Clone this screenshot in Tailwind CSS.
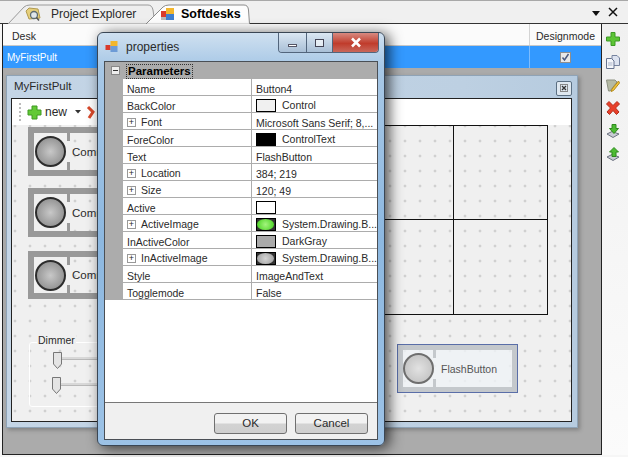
<!DOCTYPE html>
<html lang="en">
<head>
    <meta charset="UTF-8">
    <title>Softdesks</title>
    <script src="https://cdn.jsdelivr.net/npm/@tailwindcss/browser@4"></script>
</head>
<body class="relative w-[628px] h-[457px] overflow-hidden bg-[#f6f6f6] text-[10.5px] text-[#2a2a2a] [font-family:'Liberation_Sans',sans-serif]">
    <!-- tab strip -->
    <div class="relative h-6 bg-[#f0f0f0] border-t border-[#a8a8a8] border-b border-b-[#333]">
        <svg class="absolute left-0 top-0" width="260" height="24" viewBox="0 0 260 24">
            <path d="M8 23 L24 6 Q26 4 30 4 L148 4 Q152 4 153 9 L155 23 Z" fill="#eeeeee" stroke="#9a9a9a"/>
            <path d="M146 23 L163 6 Q165 4 169 4 L244 4 Q248 4 248.500 9 L249.500 23 Z" fill="#fdfdfd" stroke="#8a8a8a"/>
            <path d="M147 23 L249 23" stroke="#fdfdfd"/>
        </svg>
        <div class="relative flex items-center h-[22px] pt-[4px]">
            <svg class="ml-[24px]" width="18" height="16" viewBox="0 0 18 16">
                <path d="M2 5 L5 2 L14 3 L16 12 L5 13 Z" fill="#e6cf7a" stroke="#b09a50"/>
                <circle cx="10" cy="9" r="3.500" fill="#dfe6ea" stroke="#5d6b70" stroke-width="1.300"/>
                <path d="M12.500 11.500 L15 14.500" stroke="#555" stroke-width="1.500"/>
            </svg>
            <span class="ml-[9px] w-[87px] text-[12px] whitespace-nowrap">Project Explorer</span>
            <svg class="ml-[22px]" width="15" height="15" viewBox="0 0 15 15">
                <rect x="1" y="4" width="5" height="6" fill="#d93a2b"/>
                <rect x="6" y="1" width="8" height="6" fill="#f3b62c"/>
                <rect x="6" y="7" width="8" height="6" fill="#3f7fd0"/>
                <rect x="1" y="10" width="5" height="3" fill="#b9b9b9"/>
            </svg>
            <span class="ml-[6px] text-[12.500px] font-bold text-black">Softdesks</span>
            <svg class="absolute left-[591px] top-[10px]" width="10" height="6" viewBox="0 0 10 6"><path d="M1 0 H9 L5 5 Z" fill="#111"/></svg>
            <svg class="absolute left-[608px] top-[6px]" width="10" height="10" viewBox="0 0 10 10"><path d="M1 1 L9 9 M9 1 L1 9" stroke="#111" stroke-width="1.500"/></svg>
        </div>
    </div>

    <div class="flex h-[431px]">
        <!-- main panel -->
        <div class="relative ml-[2px] w-[600px] h-[431px] border border-[#222] border-t-0 bg-[#ababab]">
            <div class="flex h-[22px] bg-[#fbfbfb] border-b border-[#c8c8c8]">
                <div class="w-[526px] pl-[9px] leading-[25px]">Desk</div>
                <div class="flex-1 border-l border-[#d4d4d4] text-center leading-[25px]">Designmode</div>
            </div>
            <div class="flex h-[22px] bg-[#3399ff] text-white">
                <div class="w-[526px] pl-[4px] leading-[23px] text-[10px]">MyFirstPult</div>
                <div class="flex-1 border-l border-[#7cbcff] flex items-center justify-center">
                    <div class="w-[11px] h-[11px] bg-[#e8e8e8] border border-[#8e8e8e] flex items-center justify-center">
                        <svg width="9" height="9" viewBox="0 0 9 9"><path d="M1.500 4.500 L3.500 7 L7.500 1" fill="none" stroke="#4a5a80" stroke-width="1.500"/></svg>
                    </div>
                </div>
            </div>

            <!-- child window -->
            <div class="absolute left-[3px] top-[51px] w-[572px] h-[353px] bg-[linear-gradient(90deg,#c4d5e6,#bdd0e2_80%,#b6cbdf)] border border-[#8fa3b6] shadow-[2px_2px_4px_rgba(0,0,0,0.25)] pl-[4px] pr-[5px] pb-[4px]">
                <div class="flex items-center justify-between h-[22px]">
                    <span class="pl-[3px] text-[11.500px]">MyFirstPult</span>
                    <div class="w-4 h-[15px] mt-[2px] border border-[#5b6f82] rounded-[2px] bg-[#dfe8f0] flex items-center justify-center">
                        <svg width="8" height="8" viewBox="0 0 8 8"><path d="M2 2 L6 6 M6 2 L2 6" stroke="#333" stroke-width="1.300"/><rect x="0.500" y="0.500" width="7" height="7" fill="none" stroke="#888"/></svg>
                    </div>
                </div>
                <div class="relative w-[561px] h-[324px] border border-[#222] overflow-hidden bg-[#f0f0f0] bg-[radial-gradient(circle,#b0b0b0_0.8px,transparent_1.2px)] bg-[length:15px_15px] bg-[position:-4.5px_4.5px]">
                    <div class="flex items-center h-[26px] bg-white pl-[7px]">
                        <div class="w-[2px] h-[18px] border-l-2 border-dotted border-[#bbb]"></div>
                        <svg class="ml-[6px]" width="15" height="15" viewBox="0 0 15 15"><path d="M5 1 H10 V5 H14 V10 H10 V14 H5 V10 H1 V5 H5 Z" fill="#62c936" stroke="#3f9a22"/></svg>
                        <span class="ml-[3px] text-[12px]">new</span>
                        <svg class="ml-[8px]" width="6" height="4" viewBox="0 0 6 4"><path d="M0 0 H6 L3 3.500 Z" fill="#333"/></svg>
                        <svg class="ml-[5px]" width="9" height="14" viewBox="0 0 9 14"><path d="M2 2 L7 7 L3 13" fill="none" stroke="#d8482a" stroke-width="3"/></svg>
                    </div>

                    <!-- buttons on the design canvas -->
                    <div class="absolute left-[16px] top-[28px] w-[120px] h-[49px] border-[6px] border-[#999] flex items-center">
                        <div class="absolute left-0 top-0 w-[33px] h-full bg-[#f0f0f0]"></div>
                        <div class="absolute left-[33px] top-0 w-[3px] h-2 bg-[#999]"></div>
                        <div class="absolute left-[33px] bottom-0 w-[3px] h-2 bg-[#999]"></div>
                        <div class="relative w-[31px] h-[31px] ml-px rounded-full border-2 border-[#2c2c2c] bg-[radial-gradient(circle,#c8c8c8,#828282)]"></div>
                        <span class="relative top-px ml-[6px] text-[11.500px]">Comm</span>
                    </div>
                    <div class="absolute left-[16px] top-[89px] w-[120px] h-[49px] border-[6px] border-[#999] flex items-center">
                        <div class="absolute left-0 top-0 w-[33px] h-full bg-[#f0f0f0]"></div>
                        <div class="absolute left-[33px] top-0 w-[3px] h-2 bg-[#999]"></div>
                        <div class="absolute left-[33px] bottom-0 w-[3px] h-2 bg-[#999]"></div>
                        <div class="relative w-[31px] h-[31px] ml-px rounded-full border-2 border-[#2c2c2c] bg-[radial-gradient(circle,#c8c8c8,#828282)]"></div>
                        <span class="relative top-px ml-[6px] text-[11.500px]">Comm</span>
                    </div>
                    <div class="absolute left-[16px] top-[152px] w-[120px] h-[48px] border-[6px] border-[#999] flex items-center">
                        <div class="absolute left-0 top-0 w-[33px] h-full bg-[#f0f0f0]"></div>
                        <div class="absolute left-[33px] top-0 w-[3px] h-2 bg-[#999]"></div>
                        <div class="absolute left-[33px] bottom-0 w-[3px] h-2 bg-[#999]"></div>
                        <div class="relative w-[31px] h-[31px] ml-px rounded-full border-2 border-[#2c2c2c] bg-[radial-gradient(circle,#c8c8c8,#828282)]"></div>
                        <span class="relative top-px ml-[6px] text-[11.500px]">Comm</span>
                    </div>

                    <!-- dimmer group -->
                    <div class="absolute left-[17px] top-[243px] w-[120px] h-[65px] border border-white rounded-[3px]"></div>
                    <span class="absolute left-[25px] top-[235px] px-px leading-[13px] bg-[#f0f0f0]">Dimmer</span>
                    <div class="absolute left-[45px] top-[258px] w-[80px] h-[3px] bg-[#d8d8d8] border-b border-[#b8b8b8]"></div>
                    <div class="absolute left-[45px] top-[284px] w-[80px] h-[3px] bg-[#d8d8d8] border-b border-[#b8b8b8]"></div>
                    <svg class="absolute left-[40px] top-[252px]" width="11" height="19" viewBox="0 0 11 19"><path d="M1.500 1.500 H9.500 V13 L5.500 17.500 L1.500 13 Z" fill="#e4e4e4" stroke="#777"/></svg>
                    <svg class="absolute left-[39px] top-[277px]" width="11" height="19" viewBox="0 0 11 19"><path d="M1.500 1.500 H9.500 V13 L5.500 17.500 L1.500 13 Z" fill="#e4e4e4" stroke="#777"/></svg>

                    <!-- table layout -->
                    <div class="absolute left-[347px] top-[26px] w-[189px] h-[190px] border border-[#111] grid grid-cols-2 grid-rows-2">
                        <div class="border-r border-b border-[#111]"></div>
                        <div class="border-b border-[#111]"></div>
                        <div class="border-r border-[#111]"></div>
                        <div></div>
                    </div>

                    <!-- selected FlashButton -->
                    <div class="absolute left-[385px] top-[245px] w-[121px] h-[49px] border border-[#5a6ea8] bg-[#eff2f6]/80 p-[5px]">
                        <div class="relative w-full h-full flex items-center">
                            <div class="absolute -inset-[5px] border-[5px] border-[#c4c8cc]"></div>
                            <div class="absolute left-[30px] top-0 w-[3px] h-2 bg-[#c4c8cc]"></div>
                            <div class="absolute left-[30px] bottom-0 w-[3px] h-2 bg-[#c4c8cc]"></div>
                            <div class="relative w-[31px] h-[31px] rounded-full border-2 border-[#6e6e6e] bg-[radial-gradient(circle,#e2e2e2,#bcbcbc)]"></div>
                            <span class="relative top-px ml-[7px] text-[#555]">FlashButton</span>
                        </div>
                    </div>
                </div>
            </div>
        </div>

        <!-- right toolbar -->
        <div class="flex-1 flex flex-col items-center pt-[8px] pr-[5px] gap-[9px] bg-[linear-gradient(#f0f0f0,#fbfbfb)]">
            <svg width="14" height="14" viewBox="0 0 14 14"><path d="M5 0.500 H9 V5 H13.500 V9 H9 V13.500 H5 V9 H0.500 V5 H5 Z" fill="#5cc435" stroke="#3c9a24"/></svg>
            <svg width="14" height="14" viewBox="0 0 14 14"><path d="M6 0.500 H11 L13.500 3 V10.500 H6 Z" fill="#dde3f0" stroke="#76839f"/><path d="M0.500 3.500 H5.500 L8 6 V13.500 H0.500 Z" fill="#f4f6fb" stroke="#66738f"/><path d="M2 8 H6.500 M2 10 H6.500" stroke="#aab4c8"/></svg>
            <svg width="14" height="14" viewBox="0 0 14 14"><path d="M0.500 2 H9 L11 4 L4 13 H2.500 Z" fill="#b5baa4" stroke="#8c9080"/><path d="M12.500 3 L6 11 L5 13.500 L7.500 12.500 L13.500 5 Z" fill="#f2c53a" stroke="#b28a1c"/></svg>
            <svg width="14" height="14" viewBox="0 0 14 14"><path d="M3 0.500 L7 4.500 L11 0.500 L13.500 3 L9.500 7 L13 11 L10.500 13.500 L7 9.500 L3.500 13.500 L1 11 L4.500 7 L0.500 3 Z" fill="#e8402a" stroke="#b52c1a"/></svg>
            <svg width="14" height="14" viewBox="0 0 14 14"><path d="M1 10 L6 7.500 L13 10 L7 13.500 Z" fill="#c8ccd4" stroke="#6d7280"/><path d="M6 0.500 H10 V4.500 H12.500 L8 9.500 L3.500 4.500 H6 Z" fill="#4dbb33" stroke="#2f8a1e"/></svg>
            <svg width="14" height="14" viewBox="0 0 14 14"><path d="M1 10 L6 7.500 L13 10 L7 13.500 Z" fill="#c8ccd4" stroke="#6d7280"/><path d="M8 0.500 L12.500 5 H10 V9.500 H6 V5 H3.500 Z" fill="#4dbb33" stroke="#2f8a1e"/></svg>
        </div>
    </div>

    <!-- properties dialog -->
    <div class="absolute left-[97px] top-[32px] w-[288px] h-[414px] rounded-[6px] border border-[#3a4654] bg-[linear-gradient(#cfe0f0_0%,#a8c8e6_8%,#8db8e0_50%,#9cc2e6_100%)] shadow-[4px_2px_14px_rgba(0,0,0,0.7)] px-[6px] pb-[5px] flex flex-col">
        <div class="relative flex items-center h-[28px] shrink-0 pl-px">
            <svg width="14" height="14" viewBox="0 0 14 14">
                <rect x="0.500" y="5" width="5" height="5" fill="#d93a2b"/>
                <rect x="5.500" y="1" width="7" height="5" fill="#f3b62c"/>
                <rect x="5.500" y="6" width="7" height="6" fill="#6d9bd6"/>
            </svg>
            <span class="ml-[7px] text-[12px]">properties</span>
            <div class="absolute right-[-1px] top-0 flex h-5 w-[101px] rounded-b-[4px] border border-t-0 border-[#52657c] overflow-hidden">
                <div class="w-[28px] bg-[linear-gradient(#dbe7f3,#a9bfd6)] border-r border-[#52657c] flex items-center justify-center"><div class="w-[9px] h-[3px] mt-[5px] bg-white border border-[#556]"></div></div>
                <div class="w-[26px] bg-[linear-gradient(#dbe7f3,#a9bfd6)] border-r border-[#52657c] flex items-center justify-center"><div class="w-[9px] h-2 bg-white/60 border border-[#445]"></div></div>
                <div class="flex-1 bg-[linear-gradient(#d88a80,#c03c2c_55%,#c9675a)] flex items-center justify-center">
                    <svg width="12" height="11" viewBox="0 0 12 11"><path d="M2 1.500 L10 9.500 M10 1.500 L2 9.500" stroke="#fff" stroke-width="2.500"/></svg>
                </div>
            </div>
        </div>

        <div class="flex-1 flex flex-col border border-[#4a4f55] bg-[#f0f0f0]">
            <div class="flex-1 bg-white border-b border-[#777]">
                <div class="flex items-center h-[17px] bg-[#acacac] pl-[6px]">
                    <span class="w-[9px] h-[9px] border border-[#888] bg-white/80 flex items-center justify-center"><span class="w-[5px] h-px bg-[#333]"></span></span>
                    <span class="ml-[7px] mt-px text-[11.500px] font-bold text-black outline-1 outline-dotted outline-[#333] leading-[13px] px-px">Parameters</span>
                </div>
                <div class="border-l-[18px] border-[#acacac]">
                    <div class="flex h-[17px] border-b border-[#acacac]">
                        <div class="w-[129px] pl-[4px] leading-[20px] border-r border-[#acacac]">Name</div>
                        <div class="flex-1 pl-[4px] leading-[20px]">Button4</div>
                    </div>
                    <div class="flex h-[17px] border-b border-[#acacac]">
                        <div class="w-[129px] pl-[4px] leading-[20px] border-r border-[#acacac]">BackColor</div>
                        <div class="flex-1 flex items-center pl-[4px] pt-[3px]"><span class="w-5 h-[13px] border border-black bg-[#f0f0f0]"></span><span class="ml-[6px]">Control</span></div>
                    </div>
                    <div class="flex h-[17px] border-b border-[#acacac]">
                        <div class="w-[129px] flex items-center pl-[4px] pt-[3px] border-r border-[#acacac]"><span class="w-[9px] h-[9px] border border-[#999] flex items-center justify-center text-[9px] leading-none">+</span><span class="ml-[5px]">Font</span></div>
                        <div class="flex-1 pl-[4px] leading-[20px] whitespace-nowrap">Microsoft Sans Serif; 8,...</div>
                    </div>
                    <div class="flex h-[17px] border-b border-[#acacac]">
                        <div class="w-[129px] pl-[4px] leading-[20px] border-r border-[#acacac]">ForeColor</div>
                        <div class="flex-1 flex items-center pl-[4px] pt-[3px]"><span class="w-5 h-[13px] border border-black bg-black"></span><span class="ml-[6px]">ControlText</span></div>
                    </div>
                    <div class="flex h-[17px] border-b border-[#acacac]">
                        <div class="w-[129px] pl-[4px] leading-[20px] border-r border-[#acacac]">Text</div>
                        <div class="flex-1 pl-[4px] leading-[20px]">FlashButton</div>
                    </div>
                    <div class="flex h-[17px] border-b border-[#acacac]">
                        <div class="w-[129px] flex items-center pl-[4px] pt-[3px] border-r border-[#acacac]"><span class="w-[9px] h-[9px] border border-[#999] flex items-center justify-center text-[9px] leading-none">+</span><span class="ml-[5px]">Location</span></div>
                        <div class="flex-1 pl-[4px] leading-[20px]">384; 219</div>
                    </div>
                    <div class="flex h-[17px] border-b border-[#acacac]">
                        <div class="w-[129px] flex items-center pl-[4px] pt-[3px] border-r border-[#acacac]"><span class="w-[9px] h-[9px] border border-[#999] flex items-center justify-center text-[9px] leading-none">+</span><span class="ml-[5px]">Size</span></div>
                        <div class="flex-1 pl-[4px] leading-[20px]">120; 49</div>
                    </div>
                    <div class="flex h-[17px] border-b border-[#acacac]">
                        <div class="w-[129px] pl-[4px] leading-[20px] border-r border-[#acacac]">Active</div>
                        <div class="flex-1 flex items-center pl-[4px] pt-[3px]"><span class="w-5 h-[13px] border border-black bg-white"></span></div>
                    </div>
                    <div class="flex h-[17px] border-b border-[#acacac]">
                        <div class="w-[129px] flex items-center pl-[4px] pt-[3px] border-r border-[#acacac]"><span class="w-[9px] h-[9px] border border-[#999] flex items-center justify-center text-[9px] leading-none">+</span><span class="ml-[5px]">ActiveImage</span></div>
                        <div class="flex-1 flex items-center pl-[4px] pt-[3px] whitespace-nowrap"><span class="w-5 h-[13px] border border-black bg-[#333] flex items-center justify-center"><span class="w-[17px] h-[11px] rounded-[50%] bg-[radial-gradient(circle,#a4f47e,#3fd018)]"></span></span><span class="ml-[6px]">System.Drawing.B...</span></div>
                    </div>
                    <div class="flex h-[17px] border-b border-[#acacac]">
                        <div class="w-[129px] pl-[4px] leading-[20px] border-r border-[#acacac]">InActiveColor</div>
                        <div class="flex-1 flex items-center pl-[4px] pt-[3px]"><span class="w-5 h-[13px] border border-black bg-[#a9a9a9]"></span><span class="ml-[6px]">DarkGray</span></div>
                    </div>
                    <div class="flex h-[17px] border-b border-[#acacac]">
                        <div class="w-[129px] flex items-center pl-[4px] pt-[3px] border-r border-[#acacac]"><span class="w-[9px] h-[9px] border border-[#999] flex items-center justify-center text-[9px] leading-none">+</span><span class="ml-[5px]">InActiveImage</span></div>
                        <div class="flex-1 flex items-center pl-[4px] pt-[3px] whitespace-nowrap"><span class="w-5 h-[13px] border border-black bg-[#333] flex items-center justify-center"><span class="w-[17px] h-[11px] rounded-[50%] bg-[radial-gradient(circle,#d4d4d4,#9a9a9a)]"></span></span><span class="ml-[6px]">System.Drawing.B...</span></div>
                    </div>
                    <div class="flex h-[17px] border-b border-[#acacac]">
                        <div class="w-[129px] pl-[4px] leading-[20px] border-r border-[#acacac]">Style</div>
                        <div class="flex-1 pl-[4px] leading-[20px]">ImageAndText</div>
                    </div>
                    <div class="flex h-[17px] border-b border-[#acacac]">
                        <div class="w-[129px] pl-[4px] leading-[20px] border-r border-[#acacac]">Togglemode</div>
                        <div class="flex-1 pl-[4px] leading-[20px]">False</div>
                    </div>
                </div>
            </div>
            <div class="flex justify-end gap-2 h-[36px] pt-[10px] pr-[9px] shrink-0 text-[11.500px]">
                <button class="w-[73px] h-[21px] rounded-[3px] border border-[#707070] bg-[linear-gradient(#f2f2f2_45%,#d2d2d2_55%,#cfcfcf)]">OK</button>
                <button class="w-[73px] h-[21px] rounded-[3px] border border-[#707070] bg-[linear-gradient(#f2f2f2_45%,#d2d2d2_55%,#cfcfcf)]">Cancel</button>
            </div>
        </div>
    </div>
</body>
</html>
